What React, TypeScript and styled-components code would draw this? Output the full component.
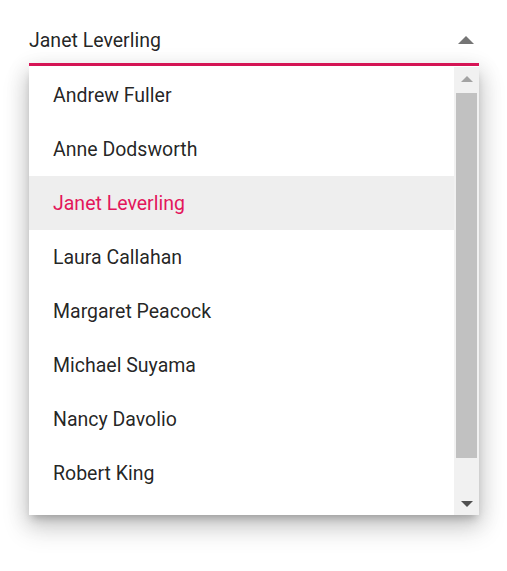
import styled, { createGlobalStyle } from "styled-components";

const GlobalStyle = createGlobalStyle`
  html, body {
    margin: 0;
    padding: 0;
    min-height: 100vh;
    background: #fff;
    font-family: Roboto, "Noto Sans", sans-serif;
  }
`;

const Page = styled.div`
  padding: 20px 28px 0 29px;
  width: 450px;
`;

const Input = styled.div`
  display: flex;
  align-items: center;
  justify-content: space-between;
  padding: 9px 5px 11px 0;
  border-bottom: 3px solid #e3165b;
  font-size: 19.5px;
  line-height: 23px;
  color: rgba(0, 0, 0, 0.87);
`;

const Caret = styled.span`
  width: 0;
  height: 0;
  border-left: 8px solid transparent;
  border-right: 8px solid transparent;
  border-bottom: 8px solid #757575;
  margin-top: -1px;
`;

const Popup = styled.div`
  display: flex;
  height: 449px;
  background: #fff;
  box-shadow: 0 6px 8px -3px rgba(0, 0, 0, 0.22), 0 12px 24px 2px rgba(0, 0, 0, 0.16),
    0 4px 20px 3px rgba(0, 0, 0, 0.1);
  overflow: hidden;
`;

const List = styled.ul`
  flex: 1;
  list-style: none;
  margin: 0;
  padding: 2px 0 0;
`;

const Item = styled.li<{ $active?: boolean }>`
  height: 54px;
  display: flex;
  align-items: center;
  padding-left: 24px;
  font-size: 19.5px;
  color: ${(p) => (p.$active ? "#e3165b" : "rgba(0, 0, 0, 0.87)")};
  background: ${(p) => (p.$active ? "#eeeeee" : "transparent")};
`;

const Scrollbar = styled.div`
  width: 25px;
  margin-top: 1px;
  display: flex;
  flex-direction: column;
  background: #f1f1f1;
`;

const ScrollButton = styled.div<{ $down?: boolean }>`
  height: 26px;
  display: flex;
  align-items: center;
  justify-content: center;

  &::after {
    content: "";
    width: 0;
    height: 0;
    border-left: 6px solid transparent;
    border-right: 6px solid transparent;
    ${(p) =>
      p.$down
        ? "border-top: 6px solid #505050; margin-top: 3px;"
        : "border-bottom: 6px solid #a3a3a3; margin-top: -2px;"}
  }
`;

const Track = styled.div`
  flex: 1;
  padding: 0 2px;
`;

const Thumb = styled.div`
  background: #c1c1c1;
`;

const people = [
  "Andrew Fuller",
  "Anne Dodsworth",
  "Janet Leverling",
  "Laura Callahan",
  "Margaret Peacock",
  "Michael Suyama",
  "Nancy Davolio",
  "Robert King",
];

const selected = "Janet Leverling";

export default function App() {
  const trackHeight = 397;
  const thumbHeight = Math.round(trackHeight * 0.92);
  return (
    <>
      <GlobalStyle />
      <Page>
        <Input>
          <span>{selected}</span>
          <Caret />
        </Input>
        <Popup>
          <List>
            {people.map((name) => (
              <Item key={name} $active={name === selected}>
                {name}
              </Item>
            ))}
          </List>
          <Scrollbar>
            <ScrollButton />
            <Track>
              <Thumb style={{ height: thumbHeight }} />
            </Track>
            <ScrollButton $down />
          </Scrollbar>
        </Popup>
      </Page>
    </>
  );
}
